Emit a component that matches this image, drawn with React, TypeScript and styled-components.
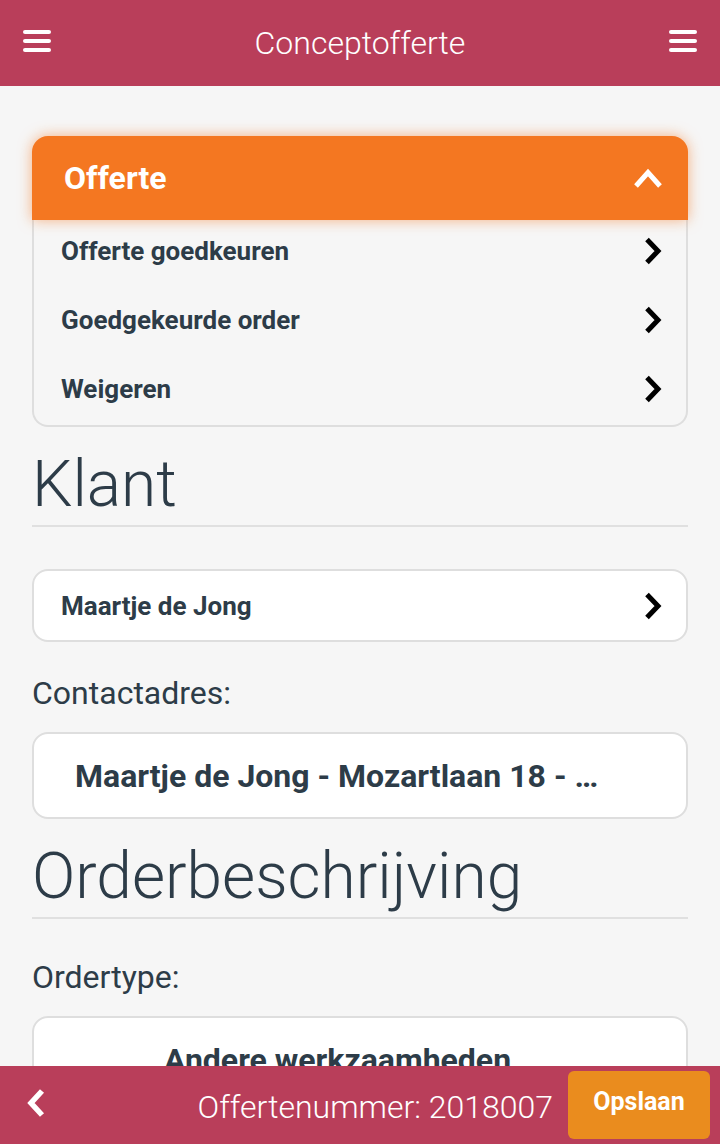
import React from "react"
import styled, { createGlobalStyle } from "styled-components"

const GlobalStyle = createGlobalStyle`
  html, body {
    margin: 0;
    padding: 0;
    background: #f6f6f6;
    font-family: Roboto, "Noto Sans", sans-serif;
  }
  * { box-sizing: border-box; }
`

const Hamburger = () => (
  <svg width="30" height="24" viewBox="0 0 30 24">
    <g stroke="#fff" strokeWidth="4" strokeLinecap="round">
      <line x1="3" y1="3" x2="27" y2="3" />
      <line x1="3" y1="12" x2="27" y2="12" />
      <line x1="3" y1="21" x2="27" y2="21" />
    </g>
  </svg>
)

const ChevronRight = () => (
  <svg width="22" height="28" viewBox="0 0 22 28">
    <path d="M5 2.5 L16 14 L5 25.5" fill="none" stroke="#000" strokeWidth="5" />
  </svg>
)

const ChevronUp = () => (
  <svg width="32" height="22" viewBox="0 0 32 22">
    <path d="M4 19 L16 5.5 L28 19" fill="none" stroke="#fff" strokeWidth="5" />
  </svg>
)

const ChevronLeft = () => (
  <svg width="22" height="30" viewBox="0 0 22 30">
    <path d="M17 3 L6 15 L17 27" fill="none" stroke="#fff" strokeWidth="5.5" />
  </svg>
)

export default function App() {
  return (
    <>
      <GlobalStyle />
      <Screen>
        <TopBar>
          <IconButton>
            <Hamburger />
          </IconButton>
          <Title>Conceptofferte</Title>
          <IconButton>
            <Hamburger />
          </IconButton>
        </TopBar>

        <Content>
          <Panel>
            <PanelHead>
              <span>Offerte</span>
              <ChevronUp />
            </PanelHead>
            <PanelBody>
              {["Offerte goedkeuren", "Goedgekeurde order", "Weigeren"].map((t) => (
                <ActionRow key={t}>
                  <span>{t}</span>
                  <ChevronRight />
                </ActionRow>
              ))}
            </PanelBody>
          </Panel>

          <SectionTitle>Klant</SectionTitle>
          <Divider />

          <Field>
            <span>Maartje de Jong</span>
            <ChevronRight />
          </Field>

          <Label space={34}>Contactadres:</Label>
          <SelectBox>Maartje de Jong - Mozartlaan 18 - …</SelectBox>

          <SectionTitle>Orderbeschrijving</SectionTitle>
          <Divider />

          <Label space={41}>Ordertype:</Label>
          <SelectBox center>Andere werkzaamheden</SelectBox>
        </Content>

        <BottomBar>
          <BackButton>
            <ChevronLeft />
          </BackButton>
          <OrderNumber>Offertenummer: 2018007</OrderNumber>
          <SaveButton>Opslaan</SaveButton>
        </BottomBar>
      </Screen>
    </>
  )
}

const Screen = styled.div`
  height: 1144px;
  display: flex;
  flex-direction: column;
  overflow: hidden;
`

const TopBar = styled.header`
  height: 86px;
  flex-shrink: 0;
  background: #b93e5a;
  display: flex;
  align-items: center;
  justify-content: space-between;
  padding: 0 22px 0 22px;
`

const IconButton = styled.div`
  display: flex;
  align-items: center;
  margin-top: -4px;
`

const Title = styled.h1`
  margin: 0;
  color: #fff;
  font-size: 32px;
  font-weight: 300;
`

const Content = styled.main`
  flex: 1;
  overflow: hidden;
  padding: 50px 32px 0;
  color: #2d3c48;
`

const Panel = styled.section`
  border-radius: 16px;
`

const PanelHead = styled.div`
  height: 84px;
  background: #f47721;
  border-radius: 16px 16px 0 0;
  box-shadow: 0 0 14px rgba(244, 119, 33, 0.55);
  color: #fff;
  font-size: 32px;
  font-weight: 700;
  display: flex;
  align-items: center;
  justify-content: space-between;
  padding: 0 24px 0 32px;
  position: relative;
  z-index: 1;
`

const PanelBody = styled.div`
  background: #f6f6f6;
  border: 2px solid #dedede;
  border-top: none;
  border-radius: 0 0 16px 16px;
  padding: 11px 0 16px;
  display: flex;
  flex-direction: column;
  gap: 29px;
`

const ActionRow = styled.div`
  height: 40px;
  display: flex;
  align-items: center;
  justify-content: space-between;
  padding: 0 22px 0 27px;
  font-size: 26px;
  font-weight: 700;
`

const SectionTitle = styled.h2`
  margin: 22px 0 0;
  font-size: 64px;
  font-weight: 300;
  line-height: 72px;
`

const Divider = styled.hr`
  margin: 4px 0 0;
  border: none;
  border-top: 2px solid #e0e0e0;
`

const Field = styled.div`
  margin-top: 42px;
  height: 73px;
  background: #fff;
  border: 2px solid #dedede;
  border-radius: 16px;
  display: flex;
  align-items: center;
  justify-content: space-between;
  padding: 0 22px 0 27px;
  font-size: 26px;
  font-weight: 700;
`

const Label = styled.div<{ space: number }>`
  margin-top: ${(p) => p.space}px;
  font-size: 32px;
  line-height: 34px;
`

const SelectBox = styled.div<{ center?: boolean }>`
  margin-top: 22px;
  height: 87px;
  background: #fff;
  border: 2px solid #dedede;
  border-radius: 16px;
  display: flex;
  align-items: center;
  justify-content: ${(p) => (p.center ? "center" : "flex-start")};
  padding: ${(p) => (p.center ? "0 86px 0 41px" : "0 41px")};
  font-size: 32px;
  font-weight: 700;
  white-space: nowrap;
`

const BottomBar = styled.footer`
  height: 78px;
  flex-shrink: 0;
  background: #b93e5a;
  display: flex;
  align-items: center;
  padding: 0 10px 0 25px;
`

const BackButton = styled.div`
  display: flex;
  align-items: center;
  margin-top: -4px;
`

const OrderNumber = styled.div`
  flex: 1;
  text-align: right;
  color: #fff;
  font-size: 32px;
  font-weight: 300;
  padding-right: 15px;
  margin-top: 4px;
`

const SaveButton = styled.button`
  width: 142px;
  height: 68px;
  border: none;
  border-radius: 6px;
  background: #ea8c1e;
  color: #fff;
  font-family: Roboto, sans-serif;
  font-size: 25px;
  font-weight: 700;
  padding-bottom: 8px;
`
